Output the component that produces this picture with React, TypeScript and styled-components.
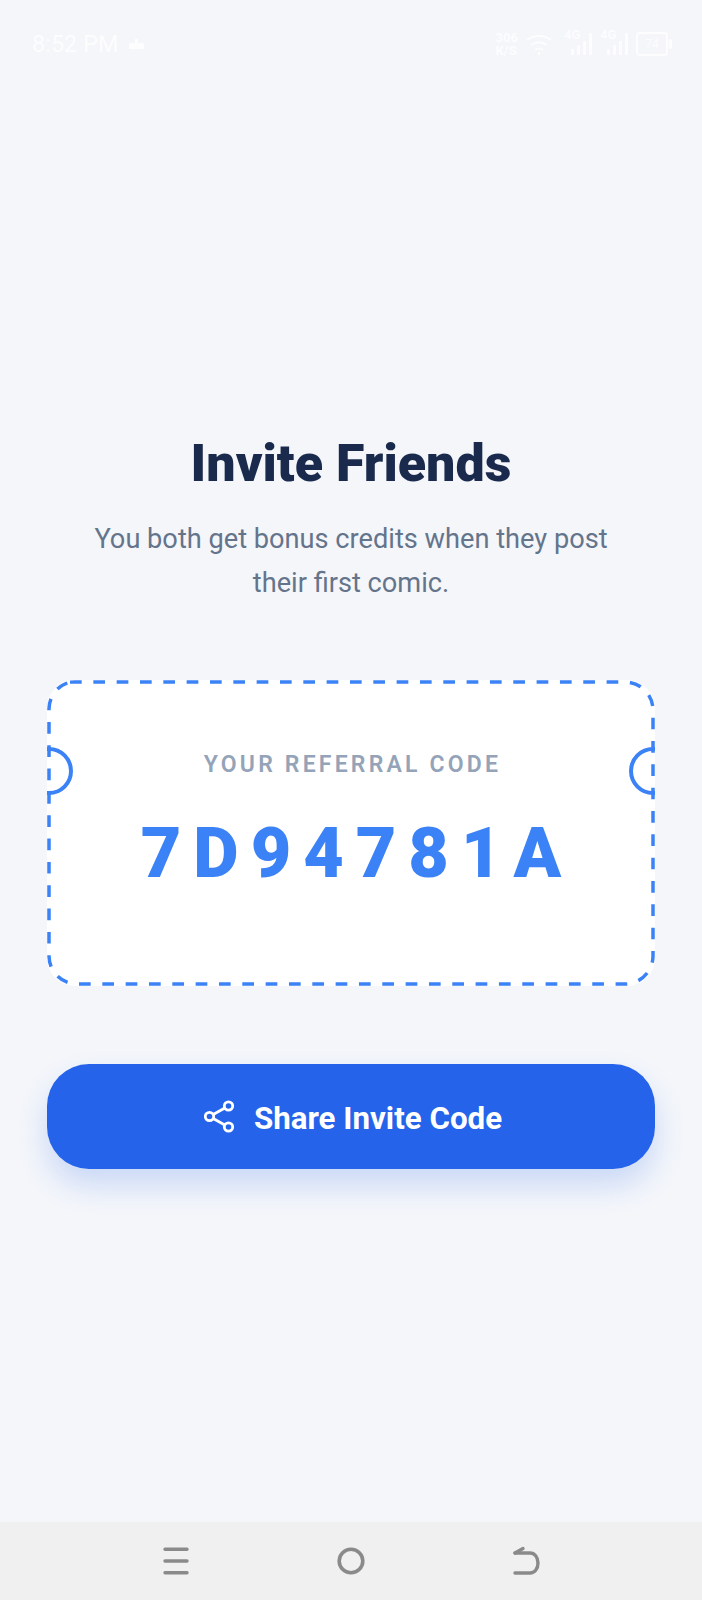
import styled, { createGlobalStyle } from "styled-components";

const GlobalStyle = createGlobalStyle`
  html, body {
    margin: 0;
    padding: 0;
    background: #f4f6fa;
    font-family: Roboto, "Liberation Sans", sans-serif;
  }
`;

const code = "7D94781A";

const SignalIcon: React.FC = () => (
  <Signal>
    <NetworkType>4G</NetworkType>
    <svg width="28" height="22" viewBox="0 0 28 22" fill="#fff">
      <rect x="7" y="16" width="3" height="6" rx="1" />
      <rect x="13" y="12" width="3" height="10" rx="1" />
      <rect x="19" y="8" width="3" height="14" rx="1" />
      <rect x="25" y="0" width="3" height="22" rx="1" />
    </svg>
  </Signal>
);

const App: React.FC = () => {
  return (
    <Page>
      <GlobalStyle />
      <StatusBar>
        <StatusLeft>
          <Clock>8:52 PM</Clock>
          <svg width="15" height="10" viewBox="0 0 15 10" fill="#fff">
            <path d="M0 4h15v6H0z" />
            <path d="M6 0h3v4H6z" />
          </svg>
        </StatusLeft>
        <StatusRight>
          <Speed>
            <span>306</span>
            <span>K/S</span>
          </Speed>
          <WifiIcon width="26" height="24" viewBox="0 0 26 24" fill="none" stroke="#fff" strokeWidth="2">
            <path d="M1 8c7-5.500 17-5.500 24 0" />
            <path d="M5 13c5-3.500 11-3.500 16 0" />
            <path d="M9 18c2.500-1.800 5.500-1.800 8 0" />
            <path d="M13 20v3" />
          </WifiIcon>
          <SignalIcon />
          <SignalIcon />
          <Battery>
            <span>74</span>
          </Battery>
        </StatusRight>
      </StatusBar>

      <Main>
        <Title>Invite Friends</Title>
        <Subtitle>
          You both get bonus credits when they post
          <br />
          their first comic.
        </Subtitle>

        <Card>
          <Notch side="left" />
          <Notch side="right" />
          <Label>YOUR REFERRAL CODE</Label>
          <Code>{code}</Code>
          <DashedEdge viewBox="0 0 608 306" fill="none">
            <path
              d="M23 2H578A28 28 0 0 1 606 30V276A28 28 0 0 1 578 304H30A28 28 0 0 1 2 276V30A28 28 0 0 1 23 2Z"
              stroke="#3b82f6"
              strokeWidth="3.5"
              strokeDasharray="11.7 11.63"
            />
          </DashedEdge>
        </Card>

        <ShareButton>
          <svg width="30" height="33" viewBox="0 0 30 33" fill="none" stroke="#fff" strokeWidth="2.8">
            <circle cx="24.500" cy="6" r="4.2" />
            <circle cx="5.500" cy="16.500" r="4.2" />
            <circle cx="24.500" cy="27" r="4.2" />
            <path d="M9.200 14.500 20.800 8M9.200 18.500 20.800 25" />
          </svg>
          <ShareText>Share Invite Code</ShareText>
        </ShareButton>
      </Main>

      <NavBar>
        <svg width="28" height="30" viewBox="0 0 28 30" fill="none" stroke="#8a8a8a" strokeWidth="3.4" strokeLinecap="round">
          <path d="M3 3.300h22M3 15h22M3 26.700h22" />
        </svg>
        <svg width="28" height="28" viewBox="0 0 28 28" fill="none" stroke="#8a8a8a" strokeWidth="3.6">
          <circle cx="14" cy="14" r="11.800" />
        </svg>
        <svg width="28" height="30" viewBox="0 0 28 30" fill="none" stroke="#8a8a8a" strokeWidth="3.4" strokeLinecap="round" strokeLinejoin="round">
          <path d="M3 27h15c4.500 0 8-4 8-10s-3.500-10-8-10H3" />
          <path d="M3 7l8-4.500" />
        </svg>
      </NavBar>
    </Page>
  );
};

export default App;

const Page = styled.div`
  display: flex;
  flex-direction: column;
  height: 1600px;
  overflow: hidden;
`;

const StatusBar = styled.div`
  display: flex;
  justify-content: space-between;
  align-items: center;
  height: 28px;
  padding: 30px 34px 0 32px;
  color: #fff;
  opacity: 0.85;
`;

const StatusLeft = styled.div`
  display: flex;
  align-items: center;
  gap: 11px;
`;

const Clock = styled.span`
  font-size: 23.500px;
`;

const StatusRight = styled.div`
  display: flex;
  align-items: center;
  gap: 8px;
`;

const WifiIcon = styled.svg`
  margin-right: 4px;
`;

const Speed = styled.div`
  display: flex;
  flex-direction: column;
  font-size: 13px;
  font-weight: 700;
  line-height: 13px;
`;

const Signal = styled.div`
  position: relative;
  display: flex;
`;

const NetworkType = styled.span`
  position: absolute;
  top: -5px;
  left: 0;
  font-size: 13px;
  font-weight: 700;
  line-height: 13px;
`;

const Battery = styled.div`
  position: relative;
  width: 28px;
  height: 20px;
  border: 2px solid #fff;
  border-radius: 4px;
  font-size: 12px;
  line-height: 20px;
  text-align: center;

  &::after {
    content: "";
    position: absolute;
    top: 5px;
    right: -6px;
    width: 3px;
    height: 10px;
    border-radius: 0 2px 2px 0;
    background: #fff;
  }
`;

const Main = styled.div`
  flex: 1;
  display: flex;
  flex-direction: column;
  padding: 374px 47px 0;
`;

const Title = styled.h1`
  margin: 0 0 22px;
  font-size: 52px;
  line-height: 64px;
  font-weight: 900;
  text-align: center;
  color: #1a2a4c;
`;

const Subtitle = styled.p`
  margin: 0 0 75px;
  font-size: 27.200px;
  line-height: 43.500px;
  text-align: center;
  color: #64748b;
`;

const Card = styled.div`
  position: relative;
  display: flex;
  flex-direction: column;
  align-items: center;
  height: 306px;
  box-sizing: border-box;
  padding-top: 70px;
  background: #fff;
  border-radius: 28px;
  overflow: hidden;
`;

const DashedEdge = styled.svg`
  position: absolute;
  inset: 0;
  width: 100%;
  height: 100%;
`;

const Notch = styled.span<{ side: "left" | "right" }>`
  position: absolute;
  top: 67px;
  ${({ side }) => side}: -22px;
  width: 48px;
  height: 48px;
  box-sizing: border-box;
  border: 4px solid #3b82f6;
  border-radius: 50%;
`;

const Label = styled.div`
  padding-left: 3px;
  font-size: 23px;
  line-height: 30px;
  font-weight: 600;
  letter-spacing: 3.200px;
  color: #94a3b8;
`;

const Code = styled.div`
  margin-top: 32px;
  padding-left: 12px;
  font-size: 70px;
  line-height: 82px;
  font-weight: 900;
  letter-spacing: 12px;
  color: #3b82f6;
`;

const ShareButton = styled.div`
  display: flex;
  align-items: center;
  justify-content: center;
  gap: 20px;
  height: 105px;
  box-sizing: border-box;
  margin-top: 78px;
  padding-left: 4px;
  border-radius: 42px;
  background: #2563eb;
  color: #fff;
  font-size: 31.300px;
  font-weight: 700;
  box-shadow: 0 16px 30px rgba(37, 99, 235, 0.2);
`;

const ShareText = styled.span`
  padding-top: 3px;
`;

const NavBar = styled.div`
  display: flex;
  align-items: center;
  justify-content: space-between;
  height: 78px;
  padding: 0 162px;
  background: #f0f0f0;
`;
